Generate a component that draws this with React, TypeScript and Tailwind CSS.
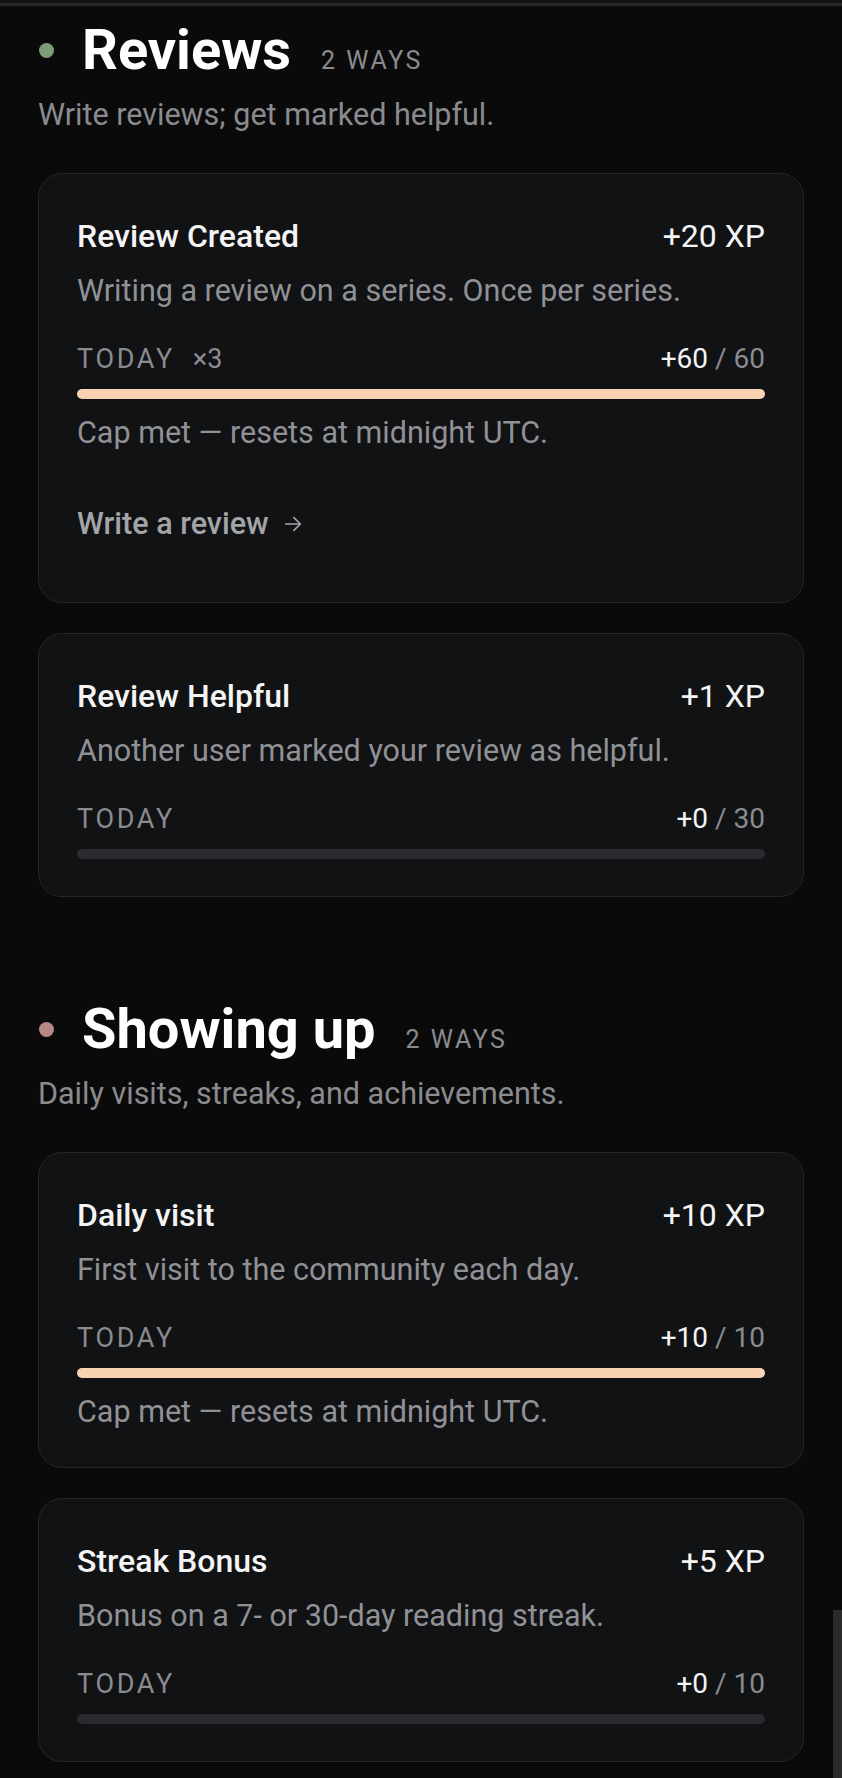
import React from 'react';

interface Way {
  title: string;
  xp: number;
  description: string;
  earned: number;
  cap: number;
  times?: number;
  action?: string;
}

interface Section {
  title: string;
  subtitle: string;
  dotClass: string;
  ways: Way[];
}

const sections: Section[] = [
  {
    title: 'Reviews',
    subtitle: 'Write reviews; get marked helpful.',
    dotClass: 'bg-[#7d9b75]',
    ways: [
      {
        title: 'Review Created',
        xp: 20,
        description: 'Writing a review on a series. Once per series.',
        earned: 60,
        cap: 60,
        times: 3,
        action: 'Write a review',
      },
      {
        title: 'Review Helpful',
        xp: 1,
        description: 'Another user marked your review as helpful.',
        earned: 0,
        cap: 30,
      },
    ],
  },
  {
    title: 'Showing up',
    subtitle: 'Daily visits, streaks, and achievements.',
    dotClass: 'bg-[#b78886]',
    ways: [
      {
        title: 'Daily visit',
        xp: 10,
        description: 'First visit to the community each day.',
        earned: 10,
        cap: 10,
      },
      {
        title: 'Streak Bonus',
        xp: 5,
        description: 'Bonus on a 7- or 30-day reading streak.',
        earned: 0,
        cap: 10,
      },
    ],
  },
];

function WayCard({ way }: { way: Way }) {
  const pct = Math.min(100, (way.earned / way.cap) * 100);
  const capMet = way.earned >= way.cap;

  return (
    <div className="rounded-[24px] border border-[#25262a] bg-[#111214] px-[38px] pt-[40px] pb-[37px]">
      <div className="flex items-baseline justify-between">
        <h3 className="text-[32px] leading-[44px] font-medium text-[#f4f4f5]">{way.title}</h3>
        <span className="text-[32px] leading-[44px] text-[#f4f4f5]">+{way.xp} XP</span>
      </div>
      <p className="mt-3 text-[30.5px] leading-[42px] text-[#909195]">{way.description}</p>

      <div className="mt-7 flex items-baseline justify-between leading-[38px]">
        <div className="flex items-baseline text-[27px] text-[#8a8b8f]">
          <span className="tracking-[0.1em]">TODAY</span>
          {way.times && <span className="ml-[18px]">×{way.times}</span>}
        </div>
        <div className="text-[28px]">
          <span className="text-[#f4f4f5]">+{way.earned}</span>
          <span className="text-[#8a8b8f]"> / {way.cap}</span>
        </div>
      </div>

      <div className="mt-[11px] h-[10px] w-full rounded-full bg-[#2a2b2f]">
        <div className="h-full rounded-full bg-[#f7d3b2]" style={{ width: `${pct}%` }} />
      </div>

      {capMet && (
        <p className="mt-[16px] text-[30.5px] leading-[36px] text-[#909195]">
          Cap met — resets at midnight UTC.
        </p>
      )}

      {way.action && (
        <div className="mt-[52px] mb-[20px]">
          <a className="inline-flex items-center gap-[13px] text-[30.5px] leading-[42px] font-medium text-[#a3a4a8]">
            {way.action}
            <svg width="22" height="22" viewBox="0 0 24 24" fill="none" stroke="currentColor" strokeWidth="1.8" strokeLinecap="round" strokeLinejoin="round">
              <path d="M4 12h16" />
              <path d="M13 5l7 7-7 7" />
            </svg>
          </a>
        </div>
      )}
    </div>
  );
}

export default function App() {
  return (
    <div
      className="relative min-h-[1778px] bg-[#0a0a0b] text-white"
      style={{ fontFamily: 'Roboto, "Noto Sans", sans-serif' }}
    >
      <div className="h-[3px] bg-[#121213]" />
      <div className="h-[3px] bg-[#28292b]" />

      <div className="px-[38px] pb-[18px]">
        {sections.map((section, i) => (
          <section key={section.title} className={i === 0 ? 'mt-[9px]' : 'mt-[97px]'}>
            <div className="flex items-center gap-[28px]">
              <span className={`ml-px h-[15px] w-[15px] shrink-0 rounded-full ${section.dotClass}`} />
              <div className="flex items-baseline gap-[30px]">
                <h2 className="text-[56px] leading-[70px] font-bold text-white">{section.title}</h2>
                <span className="text-[25px] tracking-[0.1em] text-[#8a8b8f]">2 WAYS</span>
              </div>
            </div>
            <p className="mt-[9px] text-[30.5px] leading-[42px] text-[#8a8b8f]">{section.subtitle}</p>

            <div className="mt-[37px] flex flex-col gap-[30px]">
              {section.ways.map((way) => (
                <WayCard key={way.title} way={way} />
              ))}
            </div>
          </section>
        ))}
      </div>

      <div className="absolute right-0 top-[1610px] h-[168px] w-[9px] bg-[#2a2a2c]" />
    </div>
  );
}
